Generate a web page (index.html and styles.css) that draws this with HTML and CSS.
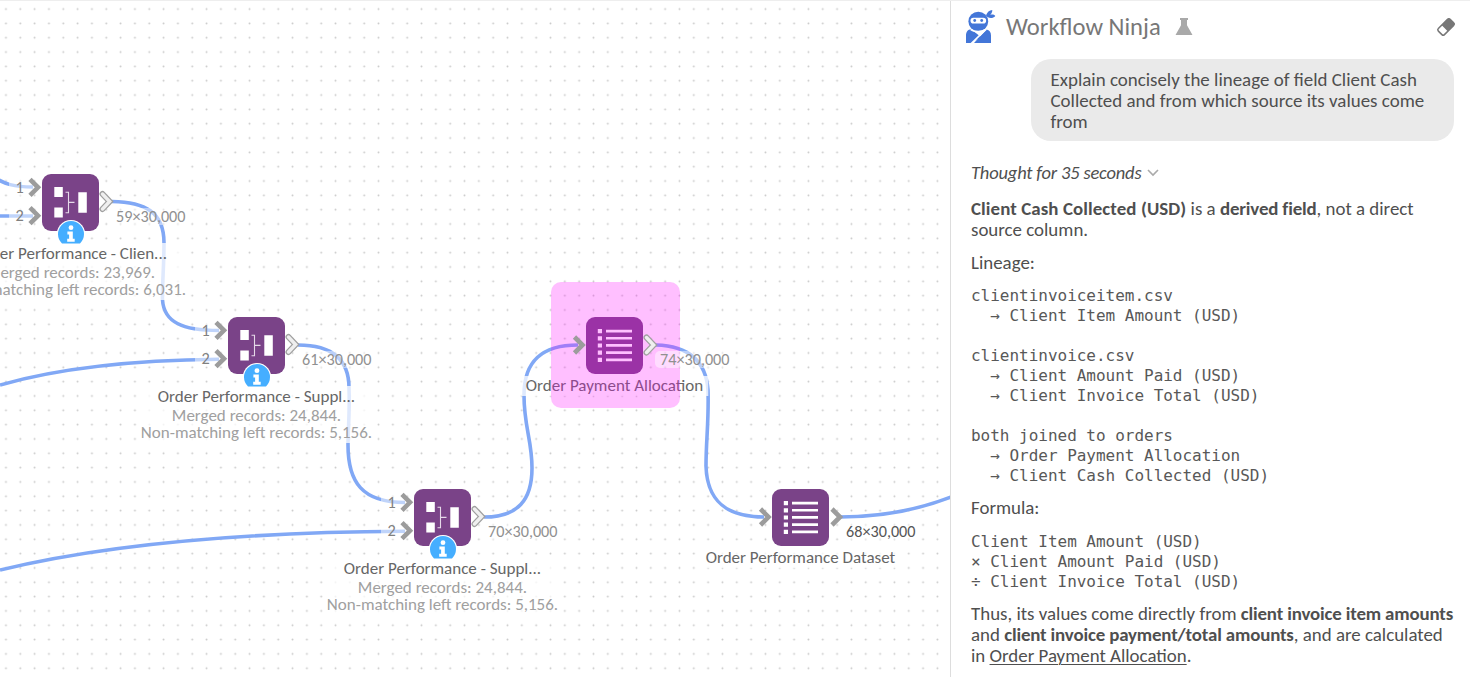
FILE: index.html
```html
<!DOCTYPE html>
<html lang="en">
<head>
<meta charset="utf-8">
<title>Workflow Ninja</title>
<link rel="stylesheet" href="styles.css">
</head>
<body>
<svg width="0" height="0" class="defs">
  <defs>
    <g id="chevron"><path d="M1.5 1.5L9.5 9.5L1.5 17.5" fill="none" stroke="#9c9c9c" stroke-width="4.6"/></g>
    <g id="chevron-open"><path d="M3.5 3L10.6 10.500L3.500 18" fill="none" stroke="#a0a0a0" stroke-width="6" stroke-linecap="round"/><path d="M3.500 3L10.600 10.500L3.500 18" fill="none" stroke="#efefef" stroke-width="3.400" stroke-linecap="round"/></g>
    <g id="join">
      <rect width="57" height="57" rx="9" fill="#7a4388"/>
      <path d="M12.3 13h8.5v10h-8.5zM12.3 33.5h8.5v10h-8.5zM36.3 18.3h8.5v20.5h-8.5z" fill="#fff"/>
      <path d="M23.5 18.3h3v20.4h-3M26.5 28.4h6" fill="none" stroke="#e5d9e8" stroke-width="1.1"/>
    </g>
    <g id="list">
      <rect width="57" height="57" rx="9" fill="#7a4388"/>
      <path d="M11.8 12h4.2v4.2h-4.2zM11.8 19.2h4.2v4.2h-4.2zM11.8 26.4h4.2v4.2h-4.2zM11.8 33.6h4.2v4.2h-4.2zM11.8 40.8h4.2v4.2h-4.2zM20 12.7h26v2.7h-26zM20 19.9h26v2.7h-26zM20 27.1h26v2.7h-26zM20 34.3h26v2.7h-26zM20 41.5h26v2.7h-26z" fill="#fff"/>
    </g>
    <g id="info">
      <path d="M.6 19.1A14.2 14.2 0 1 1 28.4 19.1Z" fill="#fff"/>
      <path d="M5.5 25.5A13 13 0 1 1 23.5 25.5Z" fill="#45aeff"/>
      <circle cx="14.5" cy="9.7" r="2.4" fill="#fff"/>
      <path d="M10.9 13.6h5.4v7.2h1.9v3h-7.5v-3h1.9v-4.3h-1.7z" fill="#fff"/>
    </g>
  </defs>
</svg>

<main class="app">
  <section class="canvas">
    <svg class="edges" width="950" height="677" viewBox="0 0 950 677">
      <defs>
        <pattern id="dots" x="-1.2" y="1.9" width="14.33" height="14.33" patternUnits="userSpaceOnUse"><circle cx="7.16" cy="7.16" r=".95" fill="#c8c8c8"/></pattern>
      </defs>
      <rect y="1" width="950" height="676" fill="url(#dots)"/>
      <g fill="none" stroke="#81a8f5" stroke-width="3.6">
        <path d="M-6 177C4 184 14 187 33 187"/>
        <path d="M0 216H33"/>
        <path d="M112 201.5C145 202 164 212 164 243C164 268 162 285 162.5 300C164 322 182 330.5 219 330.5"/>
        <path d="M0 385C60 368 140 360 219 359.3"/>
        <path d="M298 345C330 345 349 358 349 388C350 410 348 430 348 445C348 482 362 502.5 405 502.5"/>
        <path d="M0 570C120 541 260 532 405 531.3"/>
        <path d="M484 517C518 517 532 500 532 468C532 440 524 427 524 395C524 360 543 345 578 345"/>
        <path d="M656 345C690 346 706 362 708 390C709 420 706 440 706 466C707 500 725 517 764 517"/>
        <path d="M840 517C885 517 920 509 951 497"/>
      </g>
    </svg>

    <article class="node n1">
      <b class="port p1">1</b><b class="port p2">2</b>
      <div class="caption"><span class="name">Order Performance - Clien...</span><span class="meta">Merged records: 23,969.</span><span class="meta">Non-matching left records: 6,031.</span></div>
      <svg class="shape" width="100" height="75" viewBox="-20 0 100 75"><use href="#join"/><use href="#chevron" x="-13.5" y="3.8"/><use href="#chevron" x="-13.5" y="32.2"/><use href="#chevron-open" x="57" y="17"/><use href="#info" x="14.5" y="44"/></svg>
      <span class="count">59×30,000</span>
    </article>
    <article class="node n2">
      <b class="port p1">1</b><b class="port p2">2</b>
      <div class="caption"><span class="name">Order Performance - Suppl...</span><span class="meta">Merged records: 24,844.</span><span class="meta">Non-matching left records: 5,156.</span></div>
      <svg class="shape" width="100" height="75" viewBox="-20 0 100 75"><use href="#join"/><use href="#chevron" x="-13.5" y="3.8"/><use href="#chevron" x="-13.5" y="32.2"/><use href="#chevron-open" x="57" y="17"/><use href="#info" x="14.5" y="44"/></svg>
      <span class="count">61×30,000</span>
    </article>
    <article class="node n3">
      <b class="port p1">1</b><b class="port p2">2</b>
      <div class="caption"><span class="name">Order Performance - Suppl...</span><span class="meta">Merged records: 24,844.</span><span class="meta">Non-matching left records: 5,156.</span></div>
      <svg class="shape" width="100" height="75" viewBox="-20 0 100 75"><use href="#join"/><use href="#chevron" x="-13.5" y="3.8"/><use href="#chevron" x="-13.5" y="32.2"/><use href="#chevron-open" x="57" y="17"/><use href="#info" x="14.5" y="44"/></svg>
      <span class="count">70×30,000</span>
    </article>
    <article class="node n4">
      <div class="caption near"><span class="name">Order Payment Allocation</span></div>
      <svg class="shape" width="100" height="75" viewBox="-20 0 100 75"><use href="#list"/></svg>
      <i class="highlight"></i>
      <svg class="shape" width="100" height="75" viewBox="-20 0 100 75"><use href="#chevron" x="-13" y="18.5"/><use href="#chevron-open" x="57" y="17.5"/></svg>
      <span class="count">74×30,000</span>
    </article>
    <article class="node n5">
      <div class="caption near"><span class="name">Order Performance Dataset</span></div>
      <svg class="shape" width="100" height="75" viewBox="-20 0 100 75"><use href="#list"/><use href="#chevron" x="-13" y="18.5"/><use href="#chevron" x="58.5" y="18.5"/></svg>
      <span class="count dark">68×30,000</span>
    </article>
  </section>

  <aside class="panel">
    <header class="head">
      <svg class="ninja" width="30" height="34" viewBox="0 0 30 34">
        <g fill="#4376d8">
          <circle cx="12.3" cy="11.6" r="9.9"/>
          <path d="M20 6C21 2 23.5 .3 26.3 0C26.3 2 25.6 3.7 24 5C26 4.300 28 4.500 29.300 6C27 8.500 24 8.500 21.500 7Z"/>
          <path d="M0 33V25.500C0 21.500 2 19.500 5 19.200L15 27L4.500 33ZM8 33L20.500 19.500C23.500 20 25 22 25 25.500V33Z"/>
        </g>
        <path d="M4.700 19.400C8 22.300 16.500 22.300 20.200 19.200L5.800 33" fill="none" stroke="#fff" stroke-width="1.700"/>
        <rect x="4.500" y="7.700" width="15.600" height="5.800" rx="2.800" fill="#fff"/>
        <circle cx="8.700" cy="10.500" r="1.400" fill="#4376d8"/><circle cx="15.700" cy="10.500" r="1.400" fill="#4376d8"/>
      </svg>
      <h1>Workflow Ninja</h1>
      <svg class="flask" width="18" height="18" viewBox="0 0 18 18"><path d="M5 0h8v2h-1v5.200L17.500 17H.5L6 7.200V2H5z" fill="#a9a9a9"/></svg>
      <svg class="eraser" width="20" height="20" viewBox="0 0 20 20"><g transform="rotate(-45 10 10)"><rect x="1.700" y="5.700" width="16.600" height="8.600" rx="1.800" fill="#fff" stroke="#777" stroke-width="1.500"/><path d="M8.200 5.500h9a1.500 1.500 0 0 1 1.500 1.500v6a1.500 1.500 0 0 1-1.500 1.500h-9z" fill="#777"/></g></svg>
    </header>
    <div class="bubble">Explain concisely the lineage of field Client Cash<br>Collected and from which source its values come<br>from</div>
    <div class="answer">
      <p class="thought"><em>Thought for 35 seconds</em><svg width="12" height="8" viewBox="0 0 12 8"><path d="M1 1l5 5 5-5" fill="none" stroke="#aaa" stroke-width="1.600"/></svg></p>
      <p><strong class="wide">Client Cash Collected (USD)</strong> is a <strong>derived field</strong>, not a direct<br>source column.</p>
      <p class="lead">Lineage:</p>
<pre>clientinvoiceitem.csv
  → Client Item Amount (USD)

clientinvoice.csv
  → Client Amount Paid (USD)
  → Client Invoice Total (USD)

both joined to orders
  → Order Payment Allocation
  → Client Cash Collected (USD)</pre>
      <p class="lead formula">Formula:</p>
<pre>Client Item Amount (USD)
× Client Amount Paid (USD)
÷ Client Invoice Total (USD)</pre>
      <p>Thus, its values come directly from <strong>client invoice item amounts</strong><br>and <strong>client invoice payment/total amounts</strong>, and are calculated<br>in <u>Order Payment Allocation</u>.</p>
    </div>
  </aside>
</main>
</body>
</html>
```
FILE: styles.css
```css
* { box-sizing: border-box; }
body { margin: 0; overflow: hidden; background: #fff; font-family: Carlito, Lato, sans-serif; color: #4f4f4f; }
.defs { position: absolute; }
.app { display: grid; grid-template-columns: 950px 520px; height: 677px; border-top: 1px solid #eee; }

.canvas { position: relative; overflow: hidden; }
.edges { position: absolute; left: 0; top: -1px; }
.node { position: absolute; width: 57px; height: 57px; }
.n1 { left: 42px; top: 173px; }
.n2 { left: 228px; top: 316px; }
.n3 { left: 414px; top: 488px; }
.n4 { left: 586px; top: 316px; }
.n5 { left: 772px; top: 488px; }
.shape { position: absolute; left: -20px; top: 0; overflow: visible; }
.caption { position: absolute; top: 69px; left: 28.5px; transform: translateX(-50%); display: flex; flex-direction: column; align-items: center; padding: 1px 3px; white-space: nowrap; background: rgba(255,255,255,.75); }
.caption.near { top: 59px; padding: 0 5px; }
.name { font-size: 17px; line-height: 20px; color: #666; }
.meta { font-size: 17px; line-height: 17.400px; color: #a0a0a0; }
.count { position: absolute; left: 69px; top: 34px; padding: 0 5px; border-radius: 5px; background: rgba(255,255,255,.45); font-size: 16.2px; line-height: 17px; white-space: nowrap; color: #909090; }
.count.dark { color: #555; }
.port { position: absolute; left: -33px; width: 24px; padding-left: 6.5px; background: rgba(255,255,255,.5); font-size: 16.3px; line-height: 18px; font-weight: 400; color: #808080; }
.p1 { top: 4px; }
.p2 { top: 32px; }
.highlight { position: absolute; left: -35px; top: -35px; width: 129px; height: 126px; border-radius: 10px; background: rgba(255,0,255,.25); }

.panel { border-left: 1px solid #ddd; background: #fff; white-space: nowrap; }
.head { display: flex; align-items: center; height: 58px; padding: 0 14px 7px 15px; }
.ninja { flex: none; }
h1 { margin: 0 0 0 10px; font-size: 24.6px; line-height: 30px; font-weight: 400; color: #777; }
.flask { margin-left: 14px; }
.eraser { margin-left: auto; }
.bubble { width: 423px; height: 82px; margin-left: 80px; padding: 10px 19.5px; border-radius: 20px; background: #eaeaea; font-size: 18.95px; line-height: 21px; }
.answer { padding: 21px 0 0 20px; font-size: 18.9px; line-height: 21px; }
.answer p { margin: 0 0 12px; }
.answer p.thought { display: flex; align-items: center; gap: 6px; margin-bottom: 15px; }
.answer p.lead { margin-bottom: 13px; }
.answer p.formula { margin-bottom: 14px; }
.thought em { font-size: 18.5px; letter-spacing: -.18px; }
pre { margin: 0 0 11px; font-family: "DejaVu Sans Mono", monospace; font-size: 16px; line-height: 20px; letter-spacing: -.02px; color: #585858; }
strong { font-weight: 700; letter-spacing: -.15px; }
strong.wide { letter-spacing: .09px; }
u { text-underline-offset: 2px; text-decoration-thickness: 1px; }
```
